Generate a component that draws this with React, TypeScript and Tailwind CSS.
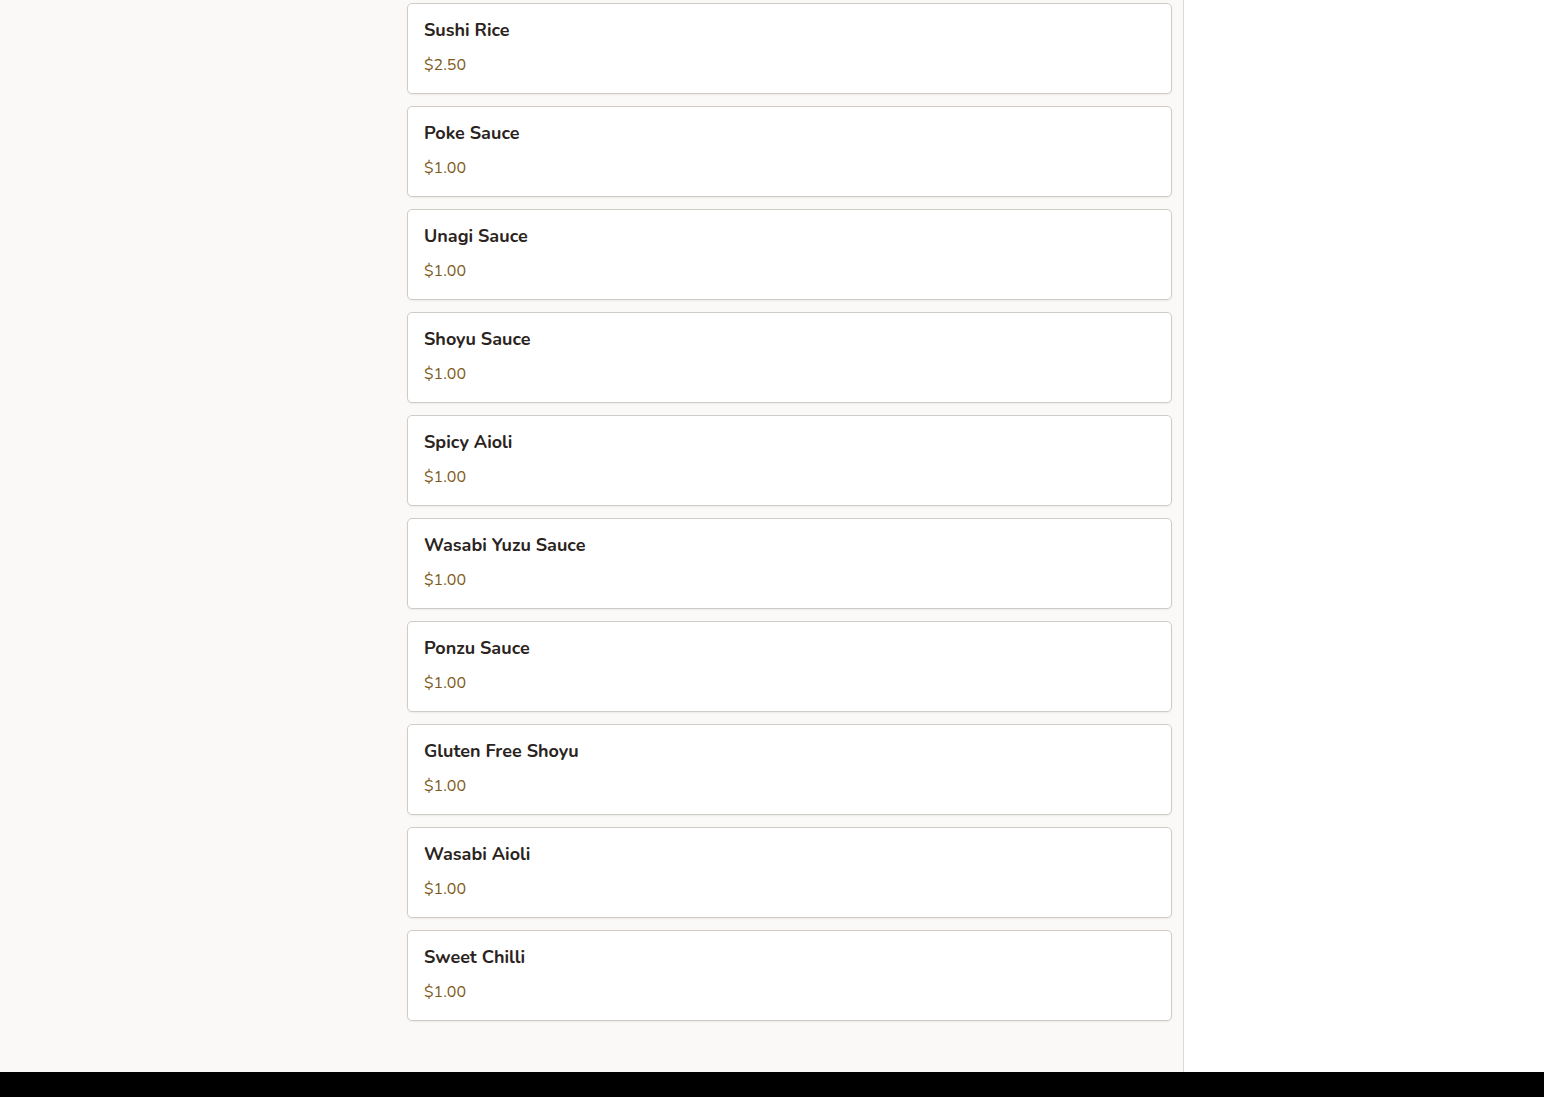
import React from "react";

const items = [
  ["Sushi Rice", "$2.50"],
  ["Poke Sauce", "$1.00"],
  ["Unagi Sauce", "$1.00"],
  ["Shoyu Sauce", "$1.00"],
  ["Spicy Aioli", "$1.00"],
  ["Wasabi Yuzu Sauce", "$1.00"],
  ["Ponzu Sauce", "$1.00"],
  ["Gluten Free Shoyu", "$1.00"],
  ["Wasabi Aioli", "$1.00"],
  ["Sweet Chilli", "$1.00"],
];

export default function App() {
  return (
    <div
      className="min-h-[1097px] flex flex-col bg-white"
      style={{ fontFamily: "Nunito, Lato, 'Noto Sans', sans-serif" }}
    >
      <div className="flex flex-1">
        <div className="w-[1184px] bg-[#faf9f7] border-r border-[#dcdad7] pt-[3px] pl-[407px] pb-[51px]">
          <div className="w-[765px] flex flex-col gap-[12px]">
            {items.map(([name, price]) => (
              <div
                key={name}
                className="bg-white border border-[#cfccc8] rounded-[5px] shadow-[0_1px_2px_rgba(0,0,0,0.06)] px-4 pt-[14px] pb-4"
              >
                <div className="text-[18px] leading-[24px] font-bold text-[#2a2320]">{name}</div>
                <div className="mt-[11px] text-[16px] leading-[24px] text-[#7d5a1c]">{price}</div>
              </div>
            ))}
          </div>
        </div>
        <div className="flex-1 bg-white" />
      </div>
      <div className="h-[25px] bg-black" />
    </div>
  );
}
